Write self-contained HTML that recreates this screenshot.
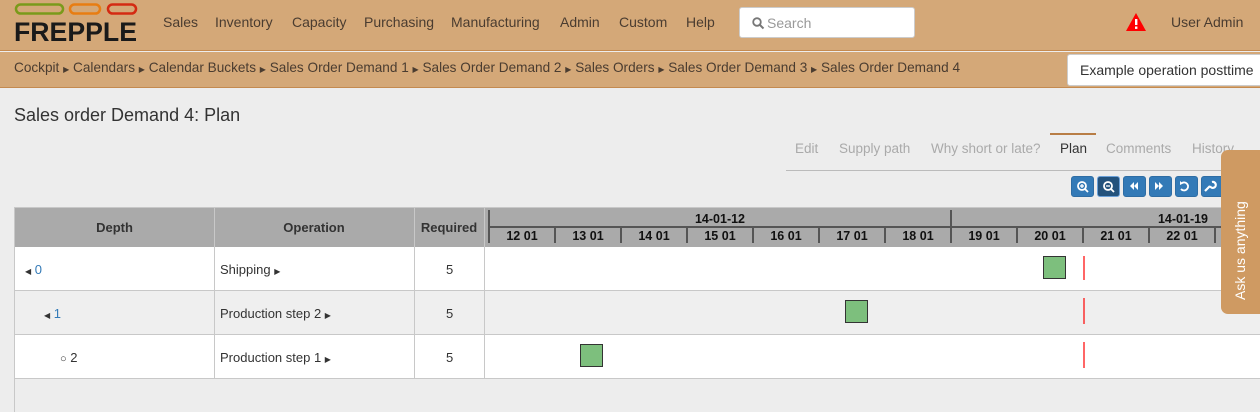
<!DOCTYPE html>
<html><head><meta charset="utf-8"><style>
*{margin:0;padding:0;box-sizing:border-box}
body{width:1260px;height:412px;overflow:hidden;background:#ededed;font-family:"Liberation Sans",sans-serif;color:#333;position:relative}
.a{position:absolute;white-space:nowrap}
.nav{font-size:14px;color:#4a3c30;top:14px}
.bc{font-size:13.6px;color:#4a3c30;top:60px}
.tab{font-size:13.5px;color:#aaa;top:141px}
.btn{position:absolute;top:176px;width:23px;height:21px;background:#337ab7;border-radius:3px;border:1px solid #2e6da4}
.hd{font-weight:bold;font-size:13px;color:#333;text-align:center;top:220px}
.cell{font-size:13px;color:#333}
</style></head><body>
<div class="a" style="left:0;top:0;width:1260px;height:51px;background:#d4a878;border-bottom:1px solid #c48a50"></div>
<div class="a" style="left:0;top:52px;width:1260px;height:36px;background:#d4a878;border-bottom:1px solid #c48a50"></div>
<svg class="a" style="left:14px;top:3px" width="124" height="42">
<rect x="2" y="1.5" width="47" height="9" rx="4.5" fill="none" stroke="#7a9a1a" stroke-width="2.5"/>
<rect x="56" y="1.5" width="30" height="9" rx="4.5" fill="none" stroke="#e87d12" stroke-width="2.5"/>
<rect x="94" y="1.5" width="28" height="9" rx="4.5" fill="none" stroke="#d42a12" stroke-width="2.5"/>
<text x="0" y="38" font-family="Liberation Sans" font-weight="bold" font-size="27" fill="#1a1a1a" textLength="123" lengthAdjust="spacingAndGlyphs">FREPPLE</text>
</svg>
<div class="a nav" style="left:163px">Sales</div>
<div class="a nav" style="left:215px">Inventory</div>
<div class="a nav" style="left:292px">Capacity</div>
<div class="a nav" style="left:364px">Purchasing</div>
<div class="a nav" style="left:451px">Manufacturing</div>
<div class="a nav" style="left:560px">Admin</div>
<div class="a nav" style="left:619px">Custom</div>
<div class="a nav" style="left:686px">Help</div>
<div class="a" style="left:739px;top:7px;width:176px;height:31px;background:#fff;border:1px solid #ccc;border-radius:3px"></div>
<svg class="a" style="left:752px;top:17px" width="13" height="13"><circle cx="5" cy="5" r="3.8" fill="none" stroke="#777" stroke-width="1.8"/><line x1="8" y1="8" x2="11.5" y2="11.5" stroke="#777" stroke-width="2"/></svg>
<div class="a" style="left:767px;top:15px;font-size:14px;color:#999">Search</div>
<svg class="a" style="left:1125px;top:12px" width="22" height="20"><path d="M11 1 L21 19 L1 19 Z" fill="#f00"/><rect x="10" y="7" width="2.4" height="6" fill="#fff"/><rect x="10" y="14.5" width="2.4" height="2.4" fill="#fff"/></svg>
<div class="a nav" style="left:1171px">User Admin</div>
<div class="a bc" style="left:14px">Cockpit <span style="font-size:8px">&#9654;</span> Calendars <span style="font-size:8px">&#9654;</span> Calendar Buckets <span style="font-size:8px">&#9654;</span> Sales Order Demand 1 <span style="font-size:8px">&#9654;</span> Sales Order Demand 2 <span style="font-size:8px">&#9654;</span> Sales Orders <span style="font-size:8px">&#9654;</span> Sales Order Demand 3 <span style="font-size:8px">&#9654;</span> Sales Order Demand 4</div>
<div class="a" style="left:1067px;top:54px;width:200px;height:32px;background:#fff;border:1px solid #ccc;border-radius:3px;font-size:14px;color:#333;padding:7px 0 0 12px;overflow:hidden">Example operation posttime</div>
<div class="a" style="left:14px;top:105px;font-size:18px;color:#333">Sales order Demand 4: Plan</div>
<div class="a tab" style="left:795px">Edit</div>
<div class="a tab" style="left:839px">Supply path</div>
<div class="a tab" style="left:931px">Why short or late?</div>
<div class="a" style="left:1050px;top:133px;width:46px;height:2px;background:#b87d45"></div>
<div class="a tab" style="left:1060px;color:#333">Plan</div>
<div class="a tab" style="left:1106px">Comments</div>
<div class="a tab" style="left:1192px">History</div>
<div class="a" style="left:786px;top:170px;width:474px;height:1px;background:#bbb"></div>
<div class="btn" style="left:1071px"></div><div class="btn" style="left:1097px;background:#23527c;border-color:#6aa0d8"></div><div class="btn" style="left:1123px"></div><div class="btn" style="left:1149px"></div><div class="btn" style="left:1175px"></div><div class="btn" style="left:1201px"></div>
<svg class="a" style="left:1071px;top:176px" width="160" height="21" fill="none" stroke="#fff" stroke-width="1.8">
<circle cx="11" cy="10" r="4"/><line x1="14" y1="13" x2="17" y2="16"/><line x1="9" y1="10" x2="13" y2="10" stroke-width="1.3"/><line x1="11" y1="8" x2="11" y2="12" stroke-width="1.3"/>
<circle cx="37" cy="10" r="4"/><line x1="40" y1="13" x2="43" y2="16"/><line x1="35" y1="10" x2="39" y2="10" stroke-width="1.3"/>
<path d="M63 6 L59 10 L63 14 Z M67 6 L63 10 L67 14 Z" fill="#fff" stroke="none"/>
<path d="M84 6 L88 10 L84 14 Z M88 6 L92 10 L88 14 Z" fill="#fff" stroke="none"/>
<path d="M111 7 A4 4 0 1 1 110 13"/><path d="M109 5 L112 7.5 L109 9" fill="#fff" stroke="none"/>
<path d="M134 15 L139 10 M139 10 A3 3 0 1 0 141 6" stroke-width="2.2"/>
</svg>
<div class="a" style="left:14px;top:207px;width:1246px;height:205px;background:#ededed;border:1px solid #c8c8c8;border-right:none;border-bottom:none"></div>
<div class="a" style="left:15px;top:208px;width:1245px;height:39px;background:#aaa"></div>
<div class="a" style="left:15px;top:247px;width:1245px;height:44px;background:#fff;border-bottom:1px solid #c8c8c8"></div>
<div class="a" style="left:15px;top:291px;width:1245px;height:44px;background:#efefef;border-bottom:1px solid #c8c8c8"></div>
<div class="a" style="left:15px;top:335px;width:1245px;height:44px;background:#fff;border-bottom:1px solid #c8c8c8"></div>
<div class="a" style="left:214px;top:208px;width:1px;height:171px;background:#c8c8c8"></div>
<div class="a" style="left:414px;top:208px;width:1px;height:171px;background:#c8c8c8"></div>
<div class="a" style="left:484px;top:208px;width:1px;height:171px;background:#c8c8c8"></div>
<div class="a hd" style="left:15px;width:199px">Depth</div>
<div class="a hd" style="left:214px;width:200px">Operation</div>
<div class="a hd" style="left:414px;width:70px">Required</div>
<svg class="a" style="left:485px;top:208px" width="775" height="171" font-family="Liberation Sans" font-size="12.5" font-weight="bold" fill="#111">
<g stroke="#555" stroke-width="2">
<line x1="4" y1="2" x2="4" y2="35"/><line x1="4" y1="19" x2="775" y2="19"/>
<line x1="466" y1="2" x2="466" y2="35"/>
<line x1="70" y1="19" x2="70" y2="35"/><line x1="136" y1="19" x2="136" y2="35"/><line x1="202" y1="19" x2="202" y2="35"/><line x1="268" y1="19" x2="268" y2="35"/><line x1="334" y1="19" x2="334" y2="35"/><line x1="400" y1="19" x2="400" y2="35"/><line x1="532" y1="19" x2="532" y2="35"/><line x1="598" y1="19" x2="598" y2="35"/><line x1="664" y1="19" x2="664" y2="35"/><line x1="730" y1="19" x2="730" y2="35"/>
</g>
<text x="235" y="15" text-anchor="middle">14-01-12</text><text x="698" y="15" text-anchor="middle">14-01-19</text>
<g text-anchor="middle"><text x="37" y="32">12 01</text><text x="103" y="32">13 01</text><text x="169" y="32">14 01</text><text x="235" y="32">15 01</text><text x="301" y="32">16 01</text><text x="367" y="32">17 01</text><text x="433" y="32">18 01</text><text x="499" y="32">19 01</text><text x="565" y="32">20 01</text><text x="631" y="32">21 01</text><text x="697" y="32">22 01</text></g>
<g fill="#7dbf7d" stroke="#333" stroke-width="1"><rect x="558.5" y="48.5" width="22" height="22"/><rect x="360.5" y="92.5" width="22" height="22"/><rect x="95.5" y="136.5" width="22" height="22"/></g>
<g stroke="#f00" stroke-width="1.2"><line x1="599" y1="48" x2="599" y2="72"/><line x1="599" y1="90" x2="599" y2="116"/><line x1="599" y1="134" x2="599" y2="160"/></g>
</svg>
<div class="a cell" style="left:25px;top:262px;color:#337ab7"><span style="font-size:8px;color:#333">&#9664;</span> 0</div>
<div class="a cell" style="left:44px;top:306px;color:#337ab7"><span style="font-size:8px;color:#333">&#9664;</span> 1</div>
<div class="a cell" style="left:60px;top:350px;color:#333"><span style="font-size:11px">&#9675;</span> 2</div>
<div class="a cell" style="left:220px;top:262px">Shipping <span style="font-size:8px">&#9654;</span></div>
<div class="a cell" style="left:220px;top:306px">Production step 2 <span style="font-size:8px">&#9654;</span></div>
<div class="a cell" style="left:220px;top:350px">Production step 1 <span style="font-size:8px">&#9654;</span></div>
<div class="a cell" style="left:446px;top:262px">5</div>
<div class="a cell" style="left:446px;top:306px">5</div>
<div class="a cell" style="left:446px;top:350px">5</div>
<div class="a" style="left:1221px;top:150px;width:45px;height:164px;background:#cf9a62;border-radius:7px 0 0 7px"></div>
<div class="a" style="left:1232px;top:300px;transform:rotate(-90deg);transform-origin:0 0;font-size:14px;color:#fff;width:140px">Ask us anything</div>
</body></html>
